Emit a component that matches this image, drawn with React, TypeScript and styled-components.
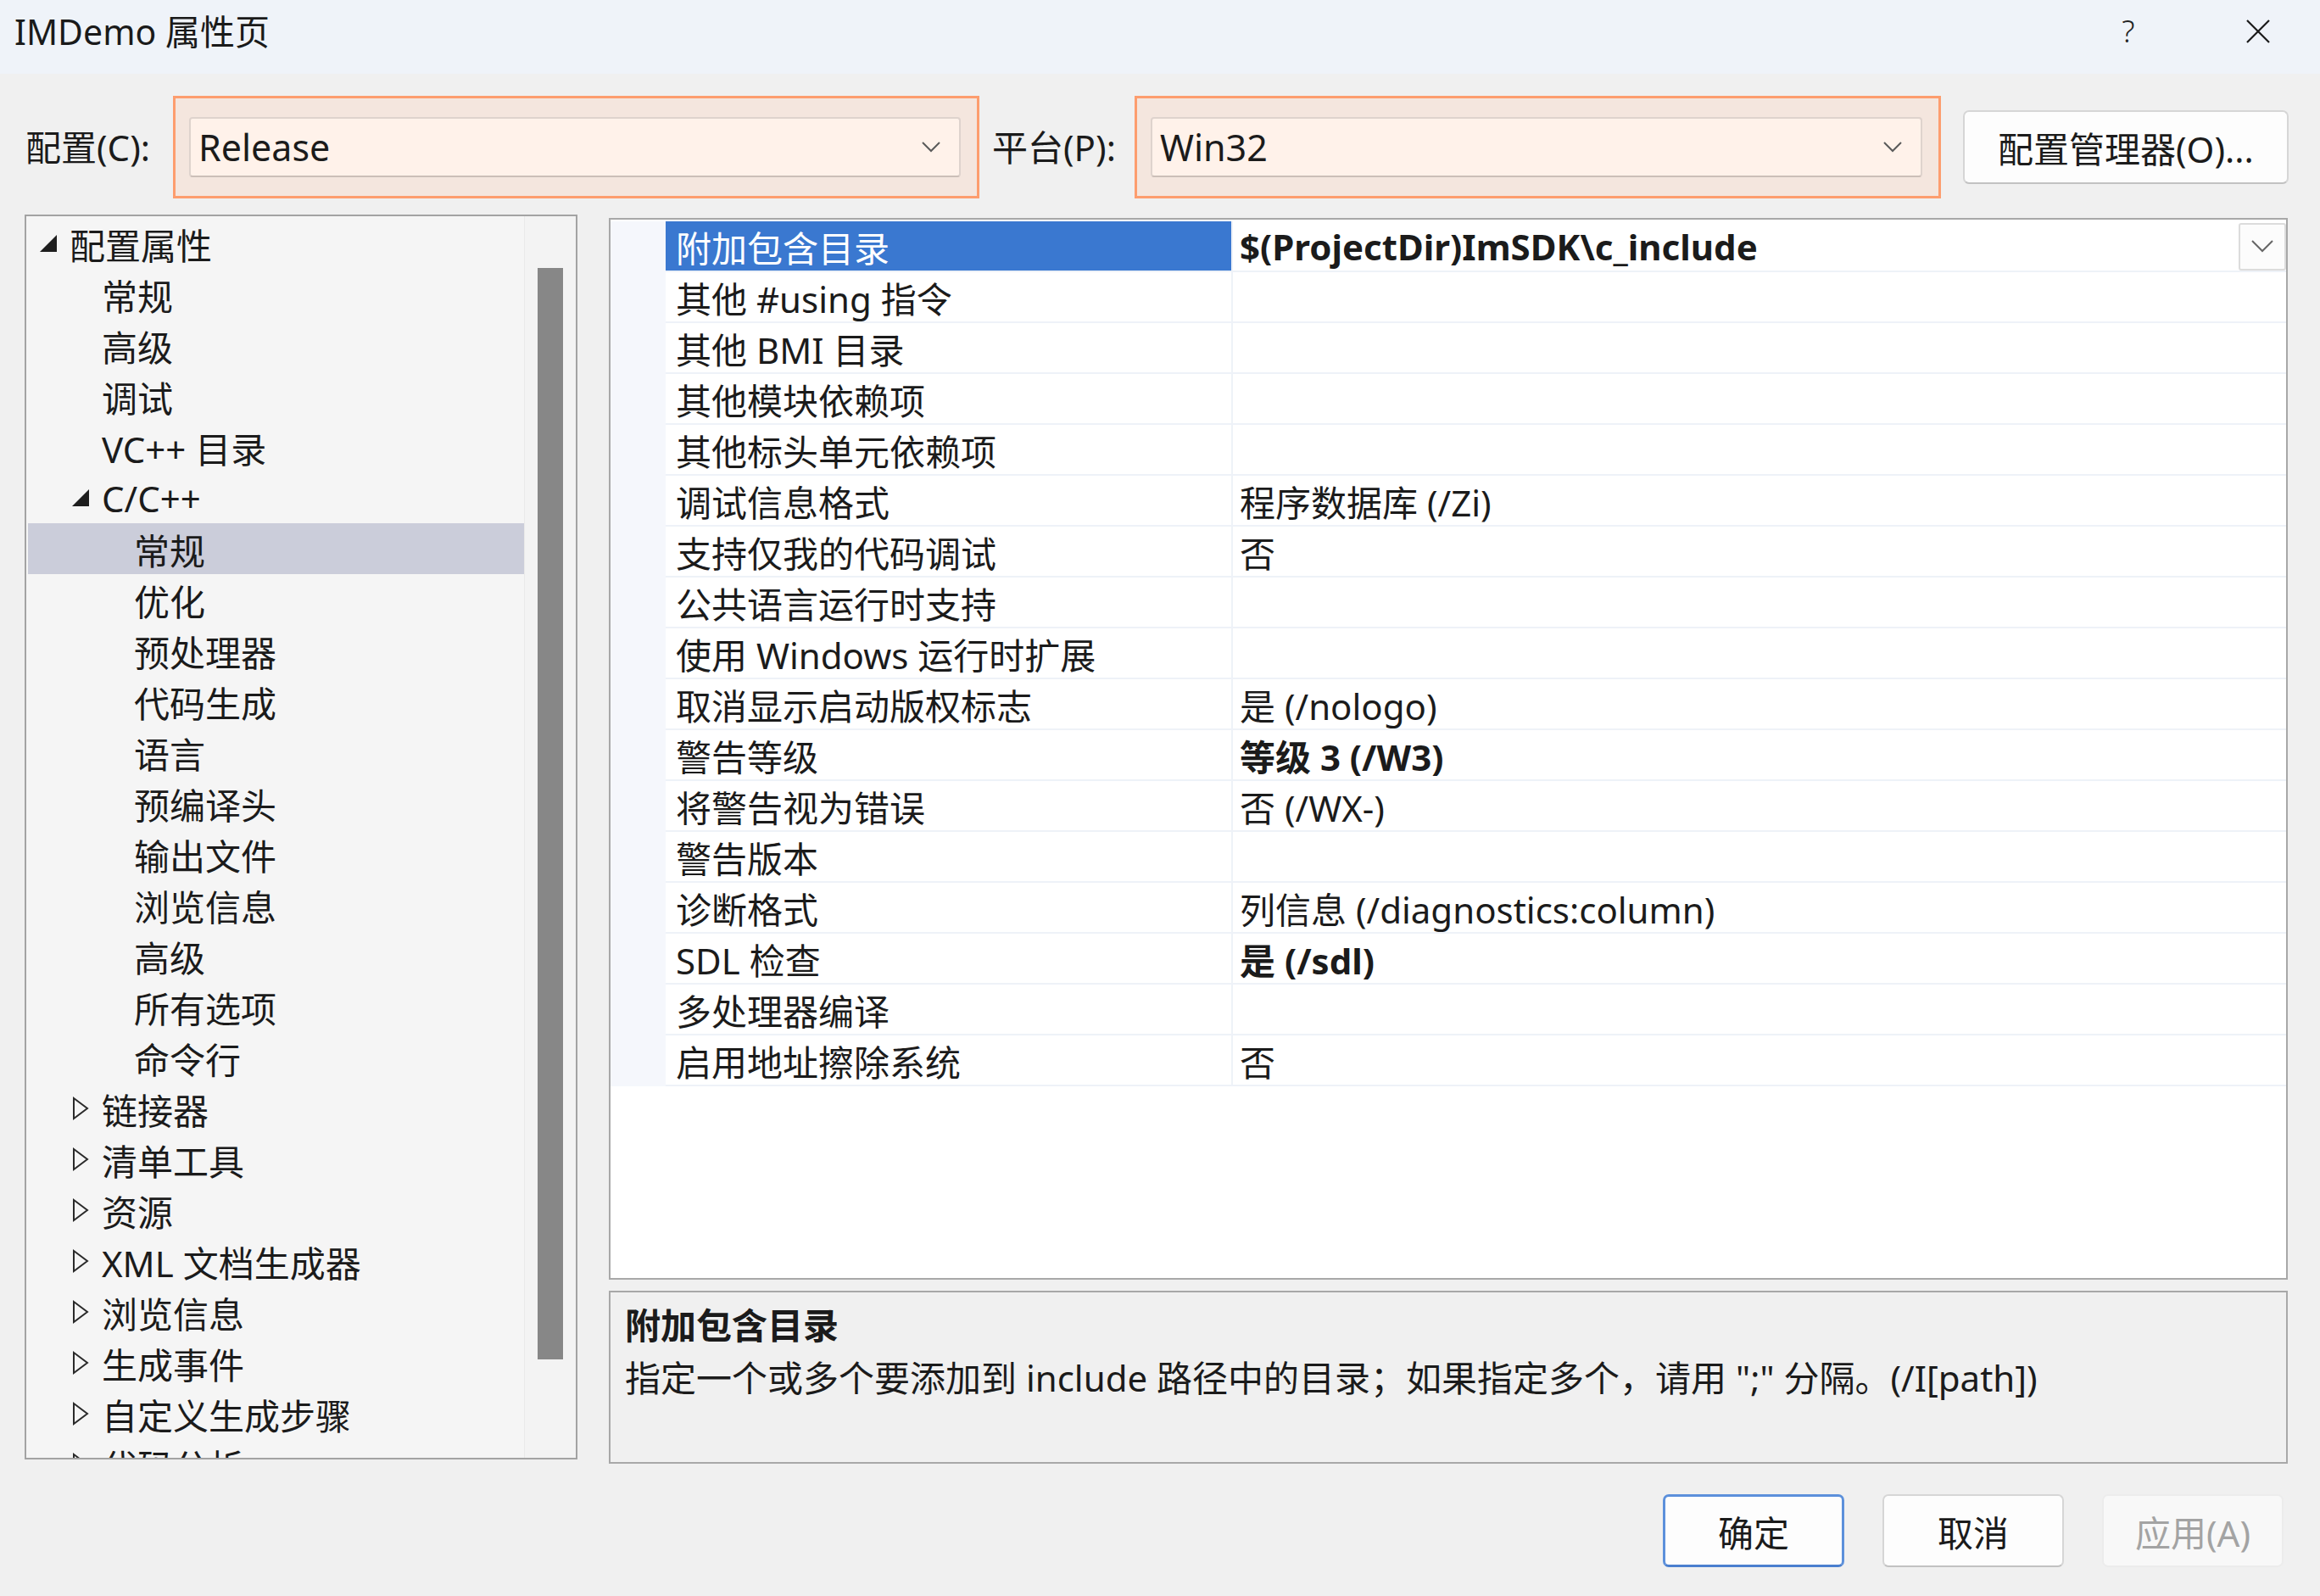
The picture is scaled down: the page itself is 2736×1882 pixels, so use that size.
import React from "react";
import styled, { createGlobalStyle, css } from "styled-components";

const GlobalStyle = createGlobalStyle`
  html, body {
    margin: 0;
    padding: 0;
    background: #f0f0f0;
  }
  body {
    font-family: "Noto Sans", "Noto Sans CJK SC", sans-serif;
    color: #1b1b1b;
  }
`;

type TreeItem = {
  label: string;
  level: number;
  expander?: "open" | "closed";
  selected?: boolean;
};

const treeItems: TreeItem[] = [
  { label: "配置属性", level: 0, expander: "open" },
  { label: "常规", level: 1 },
  { label: "高级", level: 1 },
  { label: "调试", level: 1 },
  { label: "VC++ 目录", level: 1 },
  { label: "C/C++", level: 1, expander: "open" },
  { label: "常规", level: 2, selected: true },
  { label: "优化", level: 2 },
  { label: "预处理器", level: 2 },
  { label: "代码生成", level: 2 },
  { label: "语言", level: 2 },
  { label: "预编译头", level: 2 },
  { label: "输出文件", level: 2 },
  { label: "浏览信息", level: 2 },
  { label: "高级", level: 2 },
  { label: "所有选项", level: 2 },
  { label: "命令行", level: 2 },
  { label: "链接器", level: 1, expander: "closed" },
  { label: "清单工具", level: 1, expander: "closed" },
  { label: "资源", level: 1, expander: "closed" },
  { label: "XML 文档生成器", level: 1, expander: "closed" },
  { label: "浏览信息", level: 1, expander: "closed" },
  { label: "生成事件", level: 1, expander: "closed" },
  { label: "自定义生成步骤", level: 1, expander: "closed" },
  { label: "代码分析", level: 1, expander: "closed" },
];

type Prop = { name: string; value?: string; bold?: boolean; selected?: boolean };

const properties: Prop[] = [
  { name: "附加包含目录", value: "$(ProjectDir)ImSDK\\c_include", bold: true, selected: true },
  { name: "其他 #using 指令" },
  { name: "其他 BMI 目录" },
  { name: "其他模块依赖项" },
  { name: "其他标头单元依赖项" },
  { name: "调试信息格式", value: "程序数据库 (/Zi)" },
  { name: "支持仅我的代码调试", value: "否" },
  { name: "公共语言运行时支持" },
  { name: "使用 Windows 运行时扩展" },
  { name: "取消显示启动版权标志", value: "是 (/nologo)" },
  { name: "警告等级", value: "等级 3 (/W3)", bold: true },
  { name: "将警告视为错误", value: "否 (/WX-)" },
  { name: "警告版本" },
  { name: "诊断格式", value: "列信息 (/diagnostics:column)" },
  { name: "SDL 检查", value: "是 (/sdl)", bold: true },
  { name: "多处理器编译" },
  { name: "启用地址擦除系统", value: "否" },
];

const Window = styled.div`
  width: 2736px;
  height: 1882px;
  display: flex;
  flex-direction: column;
  background: #f0f0f0;
  font-size: 42px;
  overflow: hidden;
`;

const TitleBar = styled.div`
  height: 87px;
  flex-shrink: 0;
  background: #eff3f9;
  display: flex;
  align-items: center;
  padding: 0 0 0 17px;
`;

const Title = styled.div`
  flex: 1;
  font-size: 41px;
  line-height: 1;
  color: #1a1a1a;
  margin-top: -12px;
`;

const TitleButton = styled.div<{ $width: number }>`
  width: ${(p) => p.$width}px;
  height: 87px;
  display: flex;
  align-items: center;
  justify-content: center;
  font-size: 36px;
  font-weight: 300;
  color: #222;
  margin-top: -14px;
`;

const Toolbar = styled.div`
  margin-top: 26px;
  height: 121px;
  flex-shrink: 0;
  display: flex;
  align-items: center;
  padding-left: 30px;
`;

const FieldLabel = styled.div<{ $before?: number; $after: number }>`
  margin-left: ${(p) => p.$before ?? 0}px;
  margin-right: ${(p) => p.$after}px;
  white-space: nowrap;
  line-height: 1;
`;

const Highlight = styled.div`
  width: 951px;
  height: 121px;
  box-sizing: border-box;
  border: 3px solid #fd9d6e;
  background: #f4e6de;
  display: flex;
  align-items: center;
  padding: 0 19px 0 16px;
`;

const Combo = styled.div`
  flex: 1;
  height: 71px;
  box-sizing: border-box;
  background: #fff2ea;
  border: 2px solid #ded3cd;
  border-bottom-color: #cbbfb8;
  border-radius: 4px;
  display: flex;
  align-items: center;
  justify-content: space-between;
  padding: 0 22px 0 9px;
  font-size: 43px;
`;

const Chevron = ({ w = 22, h = 11, color = "#5a5a5a" }: { w?: number; h?: number; color?: string }) => (
  <svg width={w} height={h + 2} viewBox={`0 0 ${w} ${h + 2}`}>
    <polyline points={`1,1 ${w / 2},${h} ${w - 1},1`} fill="none" stroke={color} strokeWidth={2} />
  </svg>
);

const PushButton = styled.button<{ $primary?: boolean; $disabled?: boolean }>`
  font-family: inherit;
  font-size: 42px;
  color: ${(p) => (p.$disabled ? "#a3a3a3" : "#1b1b1b")};
  background: ${(p) => (p.$disabled ? "#f8f8f8" : "#fdfdfd")};
  border: 2px solid ${(p) => (p.$disabled ? "#ececec" : "#d6d6d6")};
  border-bottom-color: ${(p) => (p.$disabled ? "#ececec" : "#c2c2c2")};
  border-radius: 7px;
  height: 86px;
  width: 214px;
  padding: 0;
  display: flex;
  align-items: center;
  justify-content: center;
  ${(p) =>
    p.$primary &&
    css`
      border: 3px solid #5c90db;
      border-bottom-color: #4a7fcf;
    `}
`;

const ManagerButton = styled(PushButton)`
  width: 384px;
  height: 87px;
  margin-left: 26px;
`;

const Main = styled.div`
  margin-top: 19px;
  height: 1473px;
  flex-shrink: 0;
  display: flex;
  gap: 37px;
  padding: 0 38px 0 29px;
`;

const TreePanel = styled.div`
  width: 652px;
  height: 1468px;
  box-sizing: border-box;
  border: 2px solid #a3a3a3;
  background: #f5f5f5;
  display: flex;
  overflow: hidden;
`;

const TreeList = styled.div`
  flex: 1;
  padding: 2px 0 0 2px;
  overflow: hidden;
`;

const TreeRow = styled.div<{ $level: number; $selected?: boolean }>`
  height: 60px;
  display: flex;
  align-items: center;
  padding-left: ${(p) => 14 + p.$level * 38}px;
  background: ${(p) => (p.$selected ? "#cbcdda" : "transparent")};
  white-space: nowrap;
`;

const Expander = styled.div`
  width: 35px;
  flex-shrink: 0;
  display: flex;
  align-items: center;
`;

const ScrollTrack = styled.div`
  width: 61px;
  background: #f3f3f3;
  border-left: 1px solid #e9e9e9;
  padding: 61px 0 0 15px;
  box-sizing: border-box;
`;

const ScrollThumb = styled.div`
  width: 30px;
  height: 1287px;
  background: #878787;
`;

const RightColumn = styled.div`
  flex: 1;
  display: flex;
  flex-direction: column;
`;

const Grid = styled.div`
  margin-top: 4px;
  height: 1252px;
  box-sizing: border-box;
  border: 2px solid #a8a8a8;
  background: #ffffff;
  padding-top: 2px;
  overflow: hidden;
`;

const GridRow = styled.div`
  display: grid;
  grid-template-columns: 65px 669px 1fr;
  height: 60px;
`;

const Gutter = styled.div`
  background: #f5f7fc;
`;

const NameCell = styled.div<{ $selected?: boolean }>`
  height: 58px;
  display: flex;
  align-items: center;
  padding-left: 12px;
  white-space: nowrap;
  background: ${(p) => (p.$selected ? "#3a78d0" : "#ffffff")};
  color: ${(p) => (p.$selected ? "#ffffff" : "#1b1b1b")};
  border-bottom: 2px solid #eef2f8;
  border-right: 2px solid #eef2f8;
`;

const ValueCell = styled.div<{ $bold?: boolean }>`
  height: 58px;
  display: flex;
  align-items: center;
  justify-content: space-between;
  padding-left: 8px;
  white-space: nowrap;
  font-weight: ${(p) => (p.$bold ? 700 : 400)};
  border-bottom: 2px solid #eef2f8;
`;

const DropButton = styled.div`
  width: 56px;
  height: 56px;
  box-sizing: border-box;
  background: #fcfcfc;
  border: 2px solid #dcdcdc;
  border-radius: 3px;
  display: flex;
  align-items: center;
  justify-content: center;
  margin-top: 1px;
`;

const Description = styled.div`
  margin-top: 13px;
  height: 204px;
  box-sizing: border-box;
  border: 2px solid #a8a8a8;
  background: #f0f0f0;
  padding: 18px 17px 0;
`;

const DescTitle = styled.div`
  font-weight: 700;
  font-size: 42px;
  line-height: 1;
`;

const DescText = styled.div`
  margin-top: 20px;
  line-height: 1;
  white-space: nowrap;
`;

const Footer = styled.div`
  margin-top: 36px;
  display: flex;
  justify-content: flex-end;
  gap: 45px;
  padding-right: 43px;
`;

const OpenTriangle = () => (
  <svg width="20" height="20" viewBox="0 0 20 20">
    <polygon points="20,0 20,20 0,20" fill="#1e1e1e" />
  </svg>
);

const ClosedTriangle = () => (
  <svg width="20" height="28" viewBox="0 0 20 28">
    <polygon points="2,2 18,14 2,26" fill="none" stroke="#2a2a2a" strokeWidth="2" />
  </svg>
);

const CloseIcon = () => (
  <svg width="30" height="30" viewBox="0 0 30 30">
    <path d="M2 2 L28 28 M28 2 L2 28" stroke="#1a1a1a" strokeWidth="2.2" fill="none" />
  </svg>
);

export default function App() {
  return (
    <>
      <GlobalStyle />
      <Window>
        <TitleBar>
          <Title>IMDemo 属性页</Title>
          <TitleButton $width={160}>?</TitleButton>
          <TitleButton $width={146}>
            <CloseIcon />
          </TitleButton>
        </TitleBar>

        <Toolbar>
          <FieldLabel $after={27}>配置(C):</FieldLabel>
          <Highlight>
            <Combo>
              <span>Release</span>
              <Chevron />
            </Combo>
          </Highlight>
          <FieldLabel $before={15} $after={22}>
            平台(P):
          </FieldLabel>
          <Highlight>
            <Combo>
              <span>Win32</span>
              <Chevron />
            </Combo>
          </Highlight>
          <ManagerButton>配置管理器(O)...</ManagerButton>
        </Toolbar>

        <Main>
          <TreePanel>
            <TreeList>
              {treeItems.map((item, i) => (
                <TreeRow key={i} $level={item.level} $selected={item.selected}>
                  <Expander>
                    {item.expander === "open" && <OpenTriangle />}
                    {item.expander === "closed" && <ClosedTriangle />}
                  </Expander>
                  {item.label}
                </TreeRow>
              ))}
            </TreeList>
            <ScrollTrack>
              <ScrollThumb />
            </ScrollTrack>
          </TreePanel>

          <RightColumn>
            <Grid>
              {properties.map((p, i) => (
                <GridRow key={i}>
                  <Gutter />
                  <NameCell $selected={p.selected}>{p.name}</NameCell>
                  <ValueCell $bold={p.bold}>
                    <span>{p.value ?? ""}</span>
                    {p.selected && (
                      <DropButton>
                        <Chevron w={26} h={13} color="#666" />
                      </DropButton>
                    )}
                  </ValueCell>
                </GridRow>
              ))}
            </Grid>
            <Description>
              <DescTitle>附加包含目录</DescTitle>
              <DescText>
                指定一个或多个要添加到 include 路径中的目录；如果指定多个，请用 ";" 分隔。(/I[path])
              </DescText>
            </Description>
          </RightColumn>
        </Main>

        <Footer>
          <PushButton $primary>确定</PushButton>
          <PushButton>取消</PushButton>
          <PushButton $disabled>应用(A)</PushButton>
        </Footer>
      </Window>
    </>
  );
}
